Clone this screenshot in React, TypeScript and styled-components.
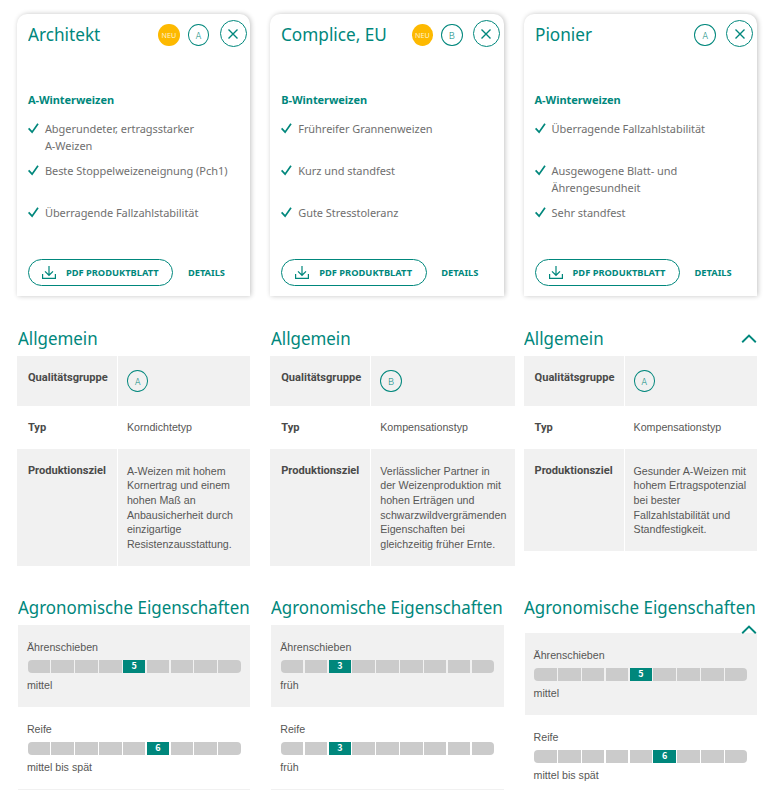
import React from "react";
import styled, { createGlobalStyle, css } from "styled-components";

interface Rating {
  name: string;
  value: number;
  text: string;
}

interface Variety {
  name: string;
  isNew: boolean;
  group: string;
  points: string[];
  type: string;
  goal: string[];
  ratings: Rating[];
}

const varieties: Variety[] = [
  {
    name: "Architekt",
    isNew: true,
    group: "A",
    points: ["Abgerundeter, ertragsstarker\nA-Weizen", "Beste Stoppelweizeneignung (Pch1)", "Überragende Fallzahlstabilität"],
    type: "Korndichtetyp",
    goal: ["A-Weizen mit hohem", "Kornertrag und einem", "hohen Maß an", "Anbausicherheit durch", "einzigartige", "Resistenzausstattung."],
    ratings: [
      { name: "Ährenschieben", value: 5, text: "mittel" },
      { name: "Reife", value: 6, text: "mittel bis spät" },
    ],
  },
  {
    name: "Complice, EU",
    isNew: true,
    group: "B",
    points: ["Frühreifer Grannenweizen", "Kurz und standfest", "Gute Stresstoleranz"],
    type: "Kompensationstyp",
    goal: ["Verlässlicher Partner in", "der Weizenproduktion mit", "hohen Erträgen und", "schwarzwildvergrämenden", "Eigenschaften bei", "gleichzeitig früher Ernte."],
    ratings: [
      { name: "Ährenschieben", value: 3, text: "früh" },
      { name: "Reife", value: 3, text: "früh" },
    ],
  },
  {
    name: "Pionier",
    isNew: false,
    group: "A",
    points: ["Überragende Fallzahlstabilität", "Ausgewogene Blatt- und\nÄhrengesundheit", "Sehr standfest"],
    type: "Kompensationstyp",
    goal: ["Gesunder A-Weizen mit", "hohem Ertragspotenzial", "bei bester", "Fallzahlstabilität und", "Standfestigkeit."],
    ratings: [
      { name: "Ährenschieben", value: 5, text: "mittel" },
      { name: "Reife", value: 6, text: "mittel bis spät" },
    ],
  },
];

const CheckIcon = () => (
  <svg width="11" height="11" viewBox="0 0 11 11" fill="none" stroke="#00877c" strokeWidth="1.7">
    <path d="M0.6 5.4 L4.1 9.2 L10 0.8" />
  </svg>
);

const CloseIcon = () => (
  <svg width="10" height="10" viewBox="0 0 10 10" fill="none" stroke="#00877c" strokeWidth="1.4">
    <path d="M0.5 0.5 L9.5 9.5 M9.5 0.5 L0.5 9.5" />
  </svg>
);

const DownloadIcon = () => (
  <svg width="14" height="13" viewBox="0 0 14 13" fill="none" stroke="#00877c" strokeWidth="1.2">
    <path d="M0.6 8 V12.3 H13.4 V8 M7 0 V9.2 M3 5.4 L7 9.3 L11 5.4" />
  </svg>
);

const ChevronUp = () => (
  <svg width="16" height="9" viewBox="0 0 16 9" fill="none" stroke="#00877c" strokeWidth="1.9">
    <path d="M1.2 8.2 L8 1.5 L14.8 8.2" />
  </svg>
);

// Sortenvergleich
const App = () => {
  return (
    <Page>
      <GlobalStyle />
      {varieties.map((item, index) => {
        const isLast = index === varieties.length - 1;

        return (
          <Column key={item.name}>
            <Card>
              <CardHeader>
                <CardTitle>
                  <HeadingText>{item.name}</HeadingText>
                </CardTitle>
                {item.isNew && <NewBadge>NEU</NewBadge>}
                <GroupBadge>{item.group}</GroupBadge>
                <CloseButton>
                  <CloseIcon />
                </CloseButton>
              </CardHeader>
              <Category>{item.group}-Winterweizen</Category>
              <PointList>
                {item.points.map((point) => (
                  <Point key={point}>
                    <CheckIcon />
                    <span>{point}</span>
                  </Point>
                ))}
              </PointList>
              <CardActions>
                <PdfButton>
                  <DownloadIcon />
                  PDF PRODUKTBLATT
                </PdfButton>
                <DetailsLink>DETAILS</DetailsLink>
              </CardActions>
            </Card>

            <GeneralHeading>
              <HeadingText>Allgemein</HeadingText>
              {isLast && <ChevronUp />}
            </GeneralHeading>
            <Table>
              <TableRow $shaded $height={50}>
                <Label>Qualitätsgruppe</Label>
                <Value $badge>
                  <GroupBadge>{item.group}</GroupBadge>
                </Value>
              </TableRow>
              <TableRow $height={43.3}>
                <Label>Typ</Label>
                <Value>{item.type}</Value>
              </TableRow>
              <TableRow $shaded>
                <Label>Produktionsziel</Label>
                <Value>{item.goal.join("\n")}</Value>
              </TableRow>
            </Table>

            <AgroHeading $wrapped={isLast} $gap={item.goal.length < 6 ? 46 : 31}>
              <HeadingText>Agronomische Eigenschaften</HeadingText>
              {isLast && <ChevronUp />}
            </AgroHeading>
            <RatingList>
              {item.ratings.map((rating) => (
                <RatingItem key={rating.name}>
                  <span>{rating.name}</span>
                  <Scale>
                    {Array.from({ length: 9 }, (_, i) => (
                      <Step key={i} $active={i + 1 === rating.value}>
                        {i + 1 === rating.value && rating.value}
                      </Step>
                    ))}
                  </Scale>
                  <span>{rating.text}</span>
                </RatingItem>
              ))}
              <RatingItem />
            </RatingList>
          </Column>
        );
      })}
    </Page>
  );
};

export default App;

const GlobalStyle = createGlobalStyle`
  body {
    margin: 0;
    background: #fff;
    overflow: hidden;
  }
  * {
    box-sizing: border-box;
  }
  svg {
    flex: none;
  }
`;

const humanist = css`
  font-family: "Noto Sans", "Open Sans", sans-serif;
`;

const narrow = css`
  font-family: "Noto Sans CJK SC", "Noto Sans", sans-serif;
`;

const Page = styled.div`
  display: grid;
  grid-template-columns: repeat(3, minmax(0, 1fr));
  column-gap: 20px;
  width: 773.9px;
  height: 790px;
  padding: 14px 17px 0 16.9px;
  overflow: hidden;
  font-family: "Liberation Sans", Arial, sans-serif;
  font-size: 10.67px;
  color: #575756;
`;

const Column = styled.div`
  min-width: 0;
`;

const Card = styled.div`
  display: flex;
  flex-direction: column;
  height: 282px;
  padding: 6px 4px 10px 11px;
  border-radius: 10px 10px 0 0;
  background: #fff;
  box-shadow: 1px 0 5px rgba(0, 0, 0, 0.24);
`;

const CardHeader = styled.div`
  display: flex;
  align-items: flex-start;
  height: 74px;
`;

const heading = css`
  ${humanist}
  display: flex;
  margin: 0;
  font-size: 18.8px;
  font-weight: 400;
  white-space: nowrap;
  color: #00877c;
`;

// slightly condensed heading face
const HeadingText = styled.span`
  display: inline-block;
  transform: scaleX(0.9);
  transform-origin: left center;
`;

const CardTitle = styled.h2`
  ${heading}
  flex: 1;
  min-width: 0;
  line-height: 29px;

  ${HeadingText} {
    transform: scaleX(0.915);
  }
`;

const badge = css`
  ${humanist}
  display: flex;
  align-items: center;
  justify-content: center;
  flex: none;
  width: 21.5px;
  height: 22px;
  border-radius: 50%;
`;

const NewBadge = styled.span`
  ${badge}
  margin: 4px 8px 0 0;
  background: #fdb900;
  font-size: 7.2px;
  line-height: 22px;
  color: #fff3d0;
`;

const GroupBadge = styled.span`
  ${badge}
  ${narrow}
  border: 1px solid #00877c;
  font-size: 9.3px;
  font-weight: 300;
  line-height: 18px;
  color: #00877c;

  ${CardHeader} & {
    margin-top: 4px;
  }
`;

const CloseButton = styled.button`
  display: flex;
  align-items: center;
  justify-content: center;
  flex: none;
  width: 27px;
  height: 27px;
  margin: 0 -0.4px 0 10.4px;
  padding: 0;
  border: 1px solid #00877c;
  border-radius: 50%;
  background: none;
  cursor: pointer;
`;

const Category = styled.strong`
  ${humanist}
  height: 27px;
  font-size: 11px;
  font-weight: 700;
  line-height: 12px;
  letter-spacing: -0.05px;
  color: #00877c;
`;

const PointList = styled.ul`
  margin: 0;
  padding: 0;
  list-style: none;
`;

const Point = styled.li`
  ${humanist}
  display: flex;
  gap: 6px;
  height: 42px;
  font-size: 11px;
  line-height: 17px;
  letter-spacing: -0.05px;
  white-space: pre;
  color: #706f6f;

  svg {
    margin-top: 2px;
  }

  span {
    margin-top: -1px;
  }
`;

const CardActions = styled.div`
  display: flex;
  align-items: center;
  margin-top: auto;
`;

const PdfButton = styled.button`
  ${humanist}
  display: flex;
  align-items: center;
  gap: 10px;
  width: 145.5px;
  height: 27px;
  padding: 0 0 0 13px;
  border: 1px solid #00877c;
  border-radius: 14px;
  background: none;
  font-size: 9.3px;
  font-weight: 700;
  line-height: 25px;
  white-space: nowrap;
  color: #00877c;
  cursor: pointer;
`;

const DetailsLink = styled.a`
  ${humanist}
  margin-left: 14.5px;
  font-size: 9.3px;
  font-weight: 700;
  color: #00877c;
`;

const GeneralHeading = styled.h3`
  ${heading}
  justify-content: space-between;
  height: 32px;
  margin-top: 28px;
  padding-left: 0.8px;
  line-height: 29px;

  svg {
    margin-top: 10px;
  }
`;

const Table = styled.div`
  display: grid;
  grid-template-columns: 100px minmax(132.3px, max-content);
  column-gap: 1px;
  width: max-content;
`;

const Label = styled.div`
  padding: 15px 0 0 11px;
  font-family: Roboto, sans-serif;
  font-size: 11.1px;
  font-weight: 700;
  line-height: 14.6px;
  color: #4a4a49;

  &:last-of-type,
  &:nth-child(1) {
    padding-top: 15.2px;
  }
`;

const Value = styled.div<{ $badge?: boolean }>`
  padding: ${({ $badge }) => ($badge ? "14px 9px" : "14.4px 9px")};
  line-height: 14.65px;
  white-space: pre;
`;

const TableRow = styled.div<{ $shaded?: boolean; $height?: number }>`
  display: contents;

  > div {
    height: ${({ $height }) => ($height ? `${$height}px` : "auto")};
    background: ${({ $shaded }) => ($shaded ? "#f1f1f1" : "transparent")};
  }
`;

const AgroHeading = styled.h3<{ $wrapped: boolean; $gap: number }>`
  ${heading}
  flex-direction: column;
  height: ${({ $wrapped }) => ($wrapped ? "36px" : "28px")};
  margin-top: ${({ $gap }) => $gap}px;
  padding-left: 0.8px;
  line-height: 20px;

  svg {
    align-self: flex-end;
    margin-top: 8px;
  }
`;

const RatingList = styled.div`
  margin-left: 1px;
`;

const RatingItem = styled.div`
  height: 82px;
  padding: 15px 9px 0;
  line-height: 15px;

  &:nth-child(odd) {
    background: #f1f1f1;
  }

  > span {
    display: block;
  }
`;

const Scale = styled.div`
  display: flex;
  gap: 1.4px;
  height: 13px;
  margin: 5px 0.5px 5px 0.7px;
  border-radius: 4px;
  overflow: hidden;
`;

const Step = styled.span<{ $active: boolean }>`
  ${narrow}
  display: flex;
  justify-content: center;
  flex: 1;
  background: ${({ $active }) => ($active ? "#00877c" : "#cbcbcb")};
  font-size: 9px;
  font-weight: 700;
  line-height: 11px;
  color: #fff;
`;
